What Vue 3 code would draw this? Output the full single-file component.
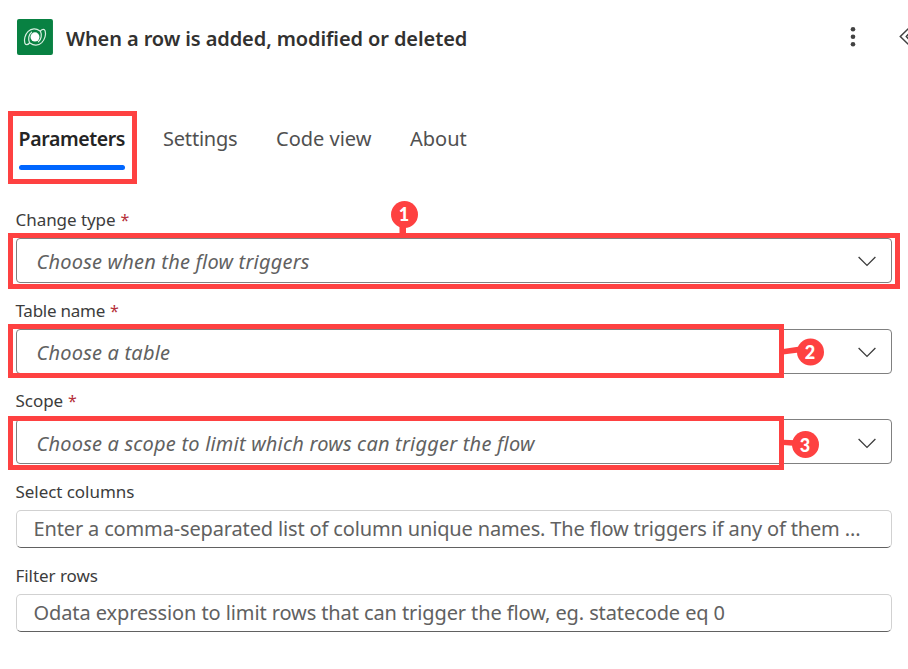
<script setup>
const tabs = [
  { label: 'Parameters', cls: 't-params', active: true },
  { label: 'Settings', cls: 't-settings' },
  { label: 'Code view', cls: 't-code' },
  { label: 'About', cls: 't-about' },
]
const selects = [
  { id: 'change', label: 'Change type', text: 'Choose when the flow triggers', n: 1 },
  { id: 'table', label: 'Table name', text: 'Choose a table', n: 2 },
  { id: 'scope', label: 'Scope', text: 'Choose a scope to limit which rows can trigger the flow', n: 3 },
]
const inputs = [
  { id: 'columns', label: 'Select columns', text: 'Enter a comma-separated list of column unique names. The flow triggers if any of them ...' },
  { id: 'filter', label: 'Filter rows', text: 'Odata expression to limit rows that can trigger the flow, eg. statecode eq 0' },
]
</script>

<template>
  <main class="panel">
    <header class="head">
      <svg class="logo" viewBox="0 0 36 36">
        <rect width="36" height="36" rx="2" fill="#088142" />
        <g fill="none" stroke="#d9efe2" stroke-width="1.2" stroke-linecap="round">
          <path d="M22.6 11.8C19.4 9.2 14.6 9.2 11.2 12.4C8 15.6 6.8 20.6 7.8 24C8.4 26.2 10.6 26.2 12.6 24C11 20.5 11.4 15.6 14.6 13.2" />
          <path d="M13.4 24.2C16.6 26.8 21.4 26.8 24.8 23.6C28 20.4 29.2 15.4 28.2 12C27.6 9.8 25.4 9.8 23.4 12C25 15.5 24.6 20.4 21.4 22.8" />
        </g>
        <ellipse cx="18" cy="17.9" rx="4.5" ry="4.6" fill="#fff" />
      </svg>
      <h1 class="title">When a row is added, modified or deleted</h1>
      <svg class="more" viewBox="0 0 6 22" fill="#424242">
        <circle cx="3" cy="3.2" r="2.3" /><circle cx="3" cy="10.7" r="2.3" /><circle cx="3" cy="18.2" r="2.3" />
      </svg>
      <svg class="collapse" viewBox="0 0 9 20" fill="none" stroke="#424242" stroke-width="1.5">
        <path d="M10 1L1.3 9.5L10 18" /><path d="M11 5.5L7.3 9.5L11 13.5" />
      </svg>
    </header>

    <nav class="tabs">
      <div v-for="t in tabs" :key="t.label" class="tab" :class="[t.cls, { active: t.active }]">
        <span>{{ t.label }}</span>
      </div>
    </nav>

    <section class="fields">
      <div v-for="s in selects" :key="s.id" class="field" :class="s.id">
        <label class="label"><span>{{ s.label }}</span><b class="req">*</b></label>
        <div class="combo">
          <i class="ph">{{ s.text }}</i>
          <svg class="chev" viewBox="0 0 18 11" fill="none" stroke="#3c3c3c" stroke-width="1.3"><path d="M.6 1L9 9.4L17.4 1" /></svg>
          <div class="mark"></div>
          <svg v-if="s.n === 1" class="callout" viewBox="0 0 28 34"><path d="M9.5 20H16V34H9.5Z" /><circle cx="14.5" cy="14.5" r="13.5" /></svg>
          <svg v-else-if="s.n === 2" class="callout" viewBox="0 0 42 28"><path d="M0 11L20 8V14L0 16.5Z" /><circle cx="27.5" cy="14" r="13.5" /></svg>
          <svg v-else class="callout" viewBox="0 0 42 28"><path d="M0 9.7L20 10.4V16.4L0 15Z" /><circle cx="22.5" cy="14.5" r="13.5" /></svg>
          <span class="num">{{ s.n }}</span>
        </div>
      </div>
      <div v-for="f in inputs" :key="f.id" class="field" :class="f.id">
        <label class="label"><span>{{ f.label }}</span></label>
        <div class="input"><span class="ph">{{ f.text }}</span></div>
      </div>
    </section>
  </main>
</template>

<style>
body { background: #fff; overflow: hidden; }
</style>

<style scoped>
.panel {
  box-sizing: border-box; width: 908px; height: 669px; overflow: hidden; background: #fff;
  font-family: "Noto Sans", "Open Sans", sans-serif; color: #323130;
}
.head { display: flex; align-items: center; height: 74px; padding-left: 17px; }
.logo { width: 36px; height: 36px; margin-right: 13px; }
.title { margin: 4px 0 0; width: 783px; font-size: 20px; line-height: 28px; font-weight: 600; white-space: nowrap; letter-spacing: -0.1px; }
.more { width: 6px; height: 22px; margin-right: 43px; margin-left: 2px; }
.collapse { width: 9px; height: 20px; flex: none; margin-top: -1px; }
.tabs { display: flex; margin: 37px 0 0 8px; height: 73px; }
.tab { display: flex; flex-direction: column; box-sizing: border-box; height: 73px; padding-top: 14px; font-size: 20px; line-height: 28px; color: #505050; white-space: nowrap; }
.active { width: 129px; border: 5px solid #fe4141; padding: 9px 6px 0; color: #242424; font-weight: 600; margin-right: 26px; }
.active span { font-size: 19.5px; letter-spacing: -0.4px; margin-left: -0.4px; }
.active::after { content: ""; width: 106px; height: 5px; border-radius: 3px; background: #0066ff; margin-top: 12px; }
.t-settings { width: 113px; letter-spacing: -0.2px; }
.t-code { width: 134px; }
.fields { padding: 21px 16px 0; }
.label { display: flex; gap: 5px; box-sizing: border-box; height: 28px; padding-top: 1px; margin-left: -0.5px; font-size: 17px; line-height: 28px; color: #3c3c3c; white-space: nowrap; letter-spacing: -0.05px; }
.req { color: #b5303a; font-weight: 400; font-size: 16px; }
.field { height: 91px; }
.change { height: 91px; }
.table { height: 90px; }
.columns { height: 84px; }
.change .label, .table .label, .scope .label { height: 33px; }
.table .label { letter-spacing: -0.25px; }
.combo { position: relative; box-sizing: border-box; display: flex; align-items: center; justify-content: space-between; width: 876px; height: 45px; padding: 2px 15px 0 19.5px; border: 1px solid #808080; border-radius: 4px; }
.ph { font-size: 20px; line-height: 28px; color: #616161; white-space: nowrap; letter-spacing: 0.2px; }
.scope .combo { padding-top: 4px; }
.chev { width: 18px; height: 11px; margin-top: -1px; }
.mark { position: absolute; box-sizing: border-box; left: -9px; top: -6px; width: 776px; height: 54px; border: 5px solid #fe4141; }
.change .mark { width: 892px; height: 56px; }
.scope .mark { top: -4px; }
.callout { position: absolute; fill: #fe4141; width: 42px; height: 28px; left: 766px; top: 8px; }
.change .callout { width: 28px; height: 34px; left: 373px; top: -39px; }
.scope .callout { top: 10px; }
.num { position: absolute; width: 20px; text-align: center; color: #fff; font: 900 18px/20px Lato, sans-serif; left: 783px; top: 12px; }
.change .num { left: 377px; top: -35px; }
.scope .num { left: 778px; top: 15px; }
.input { box-sizing: border-box; display: flex; align-items: center; width: 876px; height: 38px; padding-left: 16.5px; margin-top: 5px; border: 1px solid #d1d1d1; border-bottom-color: #616161; border-radius: 5px; }
.input .ph { letter-spacing: -0.15px; }
.filter .input .ph { letter-spacing: -0.1px; }
</style>
